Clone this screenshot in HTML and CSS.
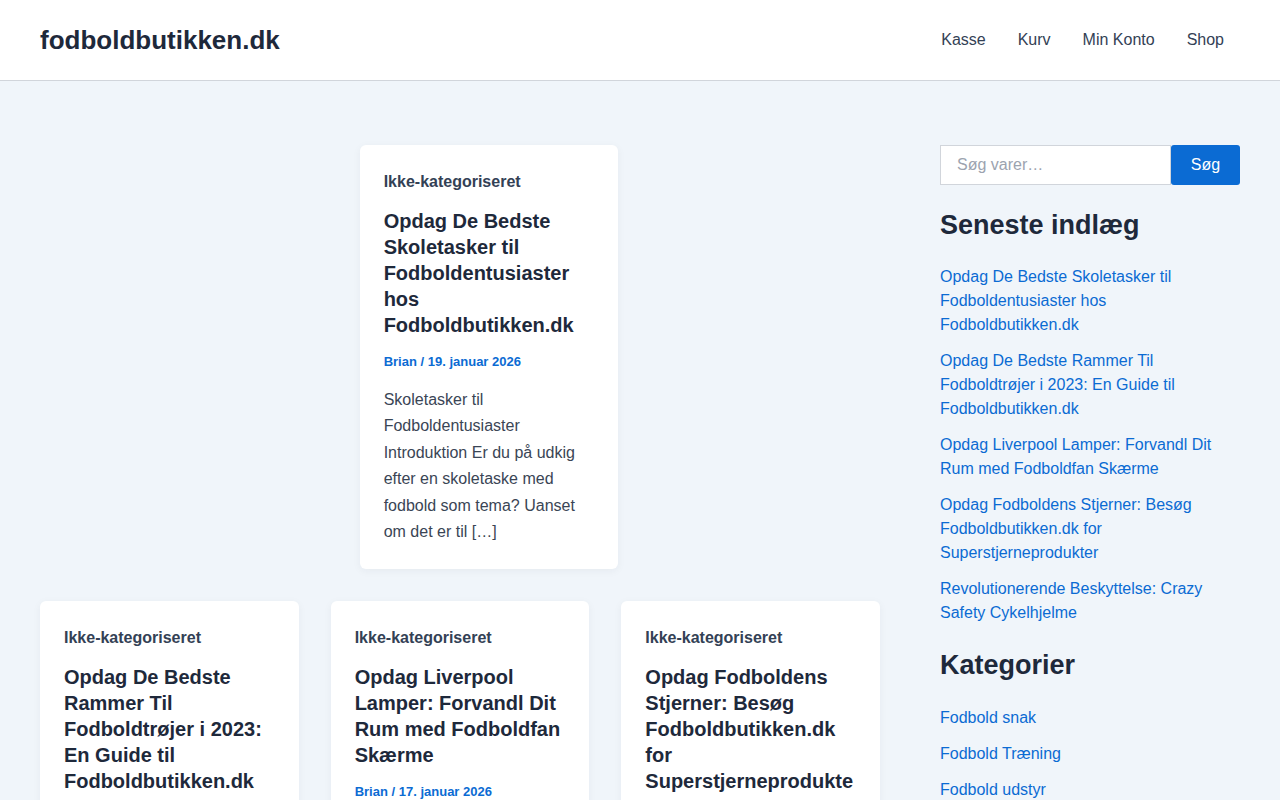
FILE: index.html
```html
<!DOCTYPE html>
<html lang="da">
<head>
  <meta charset="UTF-8">
  <title>fodboldbutikken.dk</title>
  <link rel="stylesheet" href="styles.css">
</head>
<body>

  <header class="site-header">
    <a class="site-title" href="#">fodboldbutikken.dk</a>
    <nav class="main-nav">
      <a href="#">Kasse</a>
      <a href="#">Kurv</a>
      <a href="#">Min Konto</a>
      <a href="#">Shop</a>
    </nav>
  </header>

  <div class="site-content">
    <main class="posts">

      <article class="post-card first">
        <div class="post-cat">Ikke-kategoriseret</div>
        <h2 class="post-title">Opdag De Bedste Skoletasker til Fodboldentusiaster hos Fodboldbutikken.dk</h2>
        <div class="post-meta">Brian / 19. januar 2026</div>
        <p class="post-excerpt">Skoletasker til Fodboldentusiaster Introduktion Er du på udkig efter en skoletaske med fodbold som tema? Uanset om det er til […]</p>
      </article>

      <article class="post-card">
        <div class="post-cat">Ikke-kategoriseret</div>
        <h2 class="post-title">Opdag De Bedste Rammer Til Fodboldtrøjer i 2023: En Guide til Fodboldbutikken.dk</h2>
        <div class="post-meta">Brian / 18. januar 2026</div>
        <p class="post-excerpt">Rammer til Fodboldtrøjer Introduktion Har du en fodboldtrøje, som du gerne vil vise frem? En ramme kan […]</p>
      </article>

      <article class="post-card">
        <div class="post-cat">Ikke-kategoriseret</div>
        <h2 class="post-title">Opdag Liverpool Lamper: Forvandl Dit Rum med Fodboldfan Skærme</h2>
        <div class="post-meta">Brian / 17. januar 2026</div>
        <p class="post-excerpt">Liverpool Lamper Introduktion Er du fan af Liverpool? Så er en lampe med klubbens logo et oplagt valg […]</p>
      </article>

      <article class="post-card">
        <div class="post-cat">Ikke-kategoriseret</div>
        <h2 class="post-title">Opdag Fodboldens Stjerner: Besøg Fodboldbutikken.dk for Superstjerneprodukter</h2>
        <div class="post-meta">Brian / 16. januar 2026</div>
        <p class="post-excerpt">Fodboldens Stjerner Introduktion Fodbold er fyldt med stjerner, og her finder du produkter med dem alle […]</p>
      </article>

    </main>

    <aside class="sidebar">
      <form class="search-form">
        <input type="search" placeholder="Søg varer…">
        <button type="button">Søg</button>
      </form>

      <section class="widget">
        <h2 class="widget-title">Seneste indlæg</h2>
        <ul class="widget-list">
          <li><a href="#">Opdag De Bedste Skoletasker til Fodboldentusiaster hos Fodboldbutikken.dk</a></li>
          <li><a href="#">Opdag De Bedste Rammer Til Fodboldtrøjer i 2023: En Guide til Fodboldbutikken.dk</a></li>
          <li><a href="#">Opdag Liverpool Lamper: Forvandl Dit Rum med Fodboldfan Skærme</a></li>
          <li><a href="#">Opdag Fodboldens Stjerner: Besøg Fodboldbutikken.dk for Superstjerneprodukter</a></li>
          <li><a href="#">Revolutionerende Beskyttelse: Crazy Safety Cykelhjelme</a></li>
        </ul>
      </section>

      <section class="widget">
        <h2 class="widget-title">Kategorier</h2>
        <ul class="widget-list">
          <li><a href="#">Fodbold snak</a></li>
          <li><a href="#">Fodbold Træning</a></li>
          <li><a href="#">Fodbold udstyr</a></li>
          <li><a href="#">Ikke-kategoriseret</a></li>
        </ul>
      </section>
    </aside>
  </div>

</body>
</html>
```

FILE: styles.css
```css
body {
  margin: 0;
  font-family: "Liberation Sans", Arial, sans-serif;
  font-size: 16px;
  color: #374151;
  background: #f0f5fa;
}

a {
  text-decoration: none;
}

.site-header {
  display: flex;
  justify-content: space-between;
  align-items: center;
  height: 80px;
  padding: 0 40px;
  background: #fff;
  border-bottom: 1px solid #d1d5db;
}

.site-title {
  font-size: 26px;
  font-weight: bold;
  color: #1e293b;
}

.main-nav {
  display: flex;
}

.main-nav a {
  padding: 0 16px;
  color: #334155;
  line-height: 24px;
}

.site-content {
  display: flex;
  gap: 60px;
  padding: 64px 40px 0;
}

.posts {
  flex: 1;
  display: grid;
  grid-template-columns: repeat(3, 1fr);
  gap: 32px;
  align-items: start;
}

.post-card {
  grid-row: 2;
  background: #fff;
  border-radius: 6px;
  padding: 25px 24px 24px;
  box-shadow: 0 2px 8px rgba(30, 41, 59, 0.05);
  min-width: 0;
}

.post-card.first {
  grid-column: 2;
  grid-row: 1;
  margin-left: 29px;
  margin-right: -29px;
}

.post-cat {
  font-weight: bold;
  color: #334155;
  line-height: 24px;
}

.post-title {
  margin: 14px 0 0;
  font-size: 20px;
  line-height: 26px;
  color: #1e293b;
  overflow-wrap: break-word;
}

.post-meta {
  margin-top: 14px;
  font-size: 13px;
  font-weight: bold;
  line-height: 20px;
  color: #0b6bd3;
}

.post-excerpt {
  margin: 15px 0 0;
  line-height: 1.65;
  color: #3a4555;
}

.sidebar {
  width: 300px;
  display: flex;
  flex-direction: column;
  gap: 24px;
}

.search-form {
  display: flex;
  height: 40px;
}

.search-form input {
  flex: 1;
  min-width: 0;
  border: 1px solid #d1d5db;
  background: #fff;
  padding: 0 16px;
  font-family: inherit;
  font-size: 16px;
  color: #374151;
  outline: none;
}

.search-form input::placeholder {
  color: #9ca3af;
}

.search-form button {
  width: 69px;
  border: none;
  border-radius: 3px;
  background: #0b6bd3;
  color: #fff;
  font-family: inherit;
  font-size: 16px;
}

.widget-title {
  margin: 0 0 24px;
  font-size: 27px;
  line-height: 1.2;
  color: #1e293b;
}

.widget-list {
  list-style: none;
  margin: 0;
  padding: 0;
  display: flex;
  flex-direction: column;
  gap: 12px;
}

.widget-list a {
  color: #0b6bd3;
  line-height: 24px;
}
```
